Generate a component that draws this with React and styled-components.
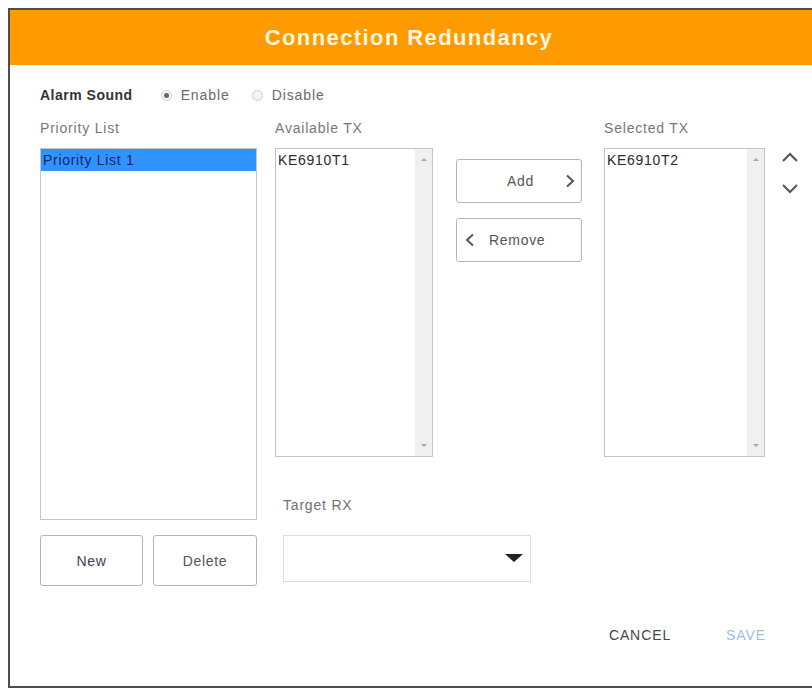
import React from "react";
import styled, { createGlobalStyle } from "styled-components";

const Global = createGlobalStyle`
  html, body { margin: 0; padding: 0; background: #fff; overflow: hidden; }
  body { font-family: "Liberation Sans", Arial, sans-serif; }
  * { box-sizing: border-box; }
`;

const Dialog = styled.div`
  margin: 8px 0 0 8px;
  width: 830px;
  height: 680px;
  border: 2px solid #4d4d4d;
  background: #fff;
  display: flex;
  flex-direction: column;
`;

const Header = styled.div`
  height: 55px;
  background: #ff9b00;
  color: #fff6dc;
  font-weight: bold;
  font-size: 22px;
  letter-spacing: 1.4px;
  display: flex;
  align-items: center;
  justify-content: center;
  padding-right: 28px;
  flex-shrink: 0;
`;

const Body = styled.div`
  width: 790px;
  padding: 20px 0 0 30px;
  display: flex;
  flex-direction: column;
`;

const AlarmRow = styled.div`
  height: 20px;
  display: flex;
  align-items: center;
  font-size: 14px;
  letter-spacing: 0.9px;
  color: #6a6a6a;
`;

const AlarmLabel = styled.span`
  font-weight: bold;
  color: #333;
  letter-spacing: 0.5px;
  margin-right: 28px;
`;

const Radio = styled.span`
  width: 11px;
  height: 11px;
  border-radius: 50%;
  border: 1px solid #cfcfcf;
  background: #f4f4f4;
  display: inline-flex;
  align-items: center;
  justify-content: center;
  margin-right: 9px;
  &::after {
    content: "";
    width: 5px;
    height: 5px;
    border-radius: 50%;
    background: ${(p) => (p.$on ? "#666" : "transparent")};
  }
`;

const RadioText = styled.span`
  margin-right: ${(p) => p.$gap || 0}px;
`;

const Main = styled.div`
  display: flex;
  margin-top: 15px;
`;

const Column = styled.div`
  display: flex;
  flex-direction: column;
  width: ${(p) => p.$w}px;
  margin-left: ${(p) => p.$ml || 0}px;
  margin-top: ${(p) => p.$mt || 0}px;
`;

const Label = styled.div`
  height: 20px;
  line-height: 16px;
  margin-bottom: 8px;
  font-size: 14px;
  letter-spacing: 0.8px;
  color: #777;
`;

const ListBox = styled.div`
  position: relative;
  height: ${(p) => p.$h}px;
  border: 1px solid #c4c4c4;
  background: #fff;
  padding-right: ${(p) => (p.$scroll ? 17 : 0)}px;
`;

const Item = styled.div`
  height: 22px;
  line-height: 22px;
  padding-left: 2px;
  font-size: 14px;
  letter-spacing: 0.7px;
  color: ${(p) => (p.$selected ? "#10266a" : "#2b2b2b")};
  background: ${(p) => (p.$selected ? "#3193ff" : "transparent")};
`;

const ScrollTrack = styled.div`
  position: absolute;
  top: 0;
  right: 0;
  bottom: 0;
  width: 17px;
  background: #f0f0f0;
  display: flex;
  flex-direction: column;
  justify-content: space-between;
  align-items: center;
  padding: 9px 0 9px;
`;

const Arrow = styled.span`
  width: 0;
  height: 0;
  border-left: 3px solid transparent;
  border-right: 3px solid transparent;
  ${(p) =>
    p.$up
      ? "border-bottom: 3px solid #a8a8a8;"
      : "border-top: 3px solid #a8a8a8;"}
`;

const ButtonRow = styled.div`
  display: flex;
  gap: 10px;
  margin-top: 15px;
`;

const Button = styled.button`
  width: ${(p) => p.$w}px;
  height: ${(p) => p.$h}px;
  margin-top: ${(p) => p.$mt || 0}px;
  border: 1px solid #b5b5b5;
  border-radius: 3px;
  background: #fff;
  font-family: inherit;
  font-size: 14px;
  letter-spacing: 0.7px;
  color: ${(p) => p.$color || "#555"};
  display: flex;
  align-items: center;
  justify-content: center;
  padding: 0;
  position: relative;
`;

const MoveButton = styled(Button)`
  justify-content: flex-start;
  padding-left: ${(p) => p.$pl}px;
  gap: ${(p) => p.$gap || 0}px;
`;

const Chev = styled.svg`
  display: block;
  flex-shrink: 0;
`;

const MidArea = styled.div`
  display: flex;
  flex-direction: column;
  margin-left: 18px;
`;

const TopRow = styled.div`
  display: flex;
`;

const Order = styled.div`
  display: flex;
  flex-direction: column;
  gap: 20px;
  margin: 31px 0 0 15px;
`;

const Target = styled.div`
  margin: 40px 0 0 8px;
  display: flex;
  flex-direction: column;
`;

const TargetLabel = styled.div`
  height: 16px;
  line-height: 16px;
  font-size: 14px;
  letter-spacing: 0.8px;
  color: #707070;
`;

const Select = styled.div`
  margin-top: 22px;
  width: 248px;
  height: 47px;
  border: 1px solid #dcdcdc;
  display: flex;
  align-items: center;
  justify-content: flex-end;
  padding-right: 7px;
`;

const Footer = styled.div`
  display: flex;
  justify-content: flex-end;
  align-items: center;
  gap: 55px;
  padding-right: 34px;
  margin-top: 41px;
  height: 16px;
  font-size: 14px;
  letter-spacing: 0.9px;
`;

const FooterBtn = styled.span`
  color: ${(p) => p.$color};
`;

const Up = () => (
  <Chev width="20" height="12" viewBox="0 0 20 12">
    <polyline points="3,10 10,3 17,10" fill="none" stroke="#555" strokeWidth="2" />
  </Chev>
);
const Down = () => (
  <Chev width="20" height="12" viewBox="0 0 20 12">
    <polyline points="3,2 10,9 17,2" fill="none" stroke="#555" strokeWidth="2" />
  </Chev>
);
const Right = () => (
  <Chev width="10" height="14" viewBox="0 0 10 14">
    <polyline points="2,1.5 8,7 2,12.5" fill="none" stroke="#555" strokeWidth="2" />
  </Chev>
);
const Left = () => (
  <Chev width="10" height="14" viewBox="0 0 10 14">
    <polyline points="8,1.5 2,7 8,12.5" fill="none" stroke="#555" strokeWidth="2" />
  </Chev>
);

export default function App() {
  return (
    <>
      <Global />
      <Dialog>
        <Header>Connection Redundancy</Header>
        <Body>
          <AlarmRow>
            <AlarmLabel>Alarm Sound</AlarmLabel>
            <Radio $on />
            <RadioText $gap={22}>Enable</RadioText>
            <Radio />
            <RadioText>Disable</RadioText>
          </AlarmRow>
          <Main>
            <Column $w={217}>
              <Label>Priority List</Label>
              <ListBox $h={372}>
                <Item $selected>Priority List 1</Item>
              </ListBox>
              <ButtonRow>
                <Button $w={103} $h={51} $color="#3a3f55">New</Button>
                <Button $w={104} $h={51}>Delete</Button>
              </ButtonRow>
            </Column>
            <MidArea>
              <TopRow>
                <Column $w={158}>
                  <Label>Available TX</Label>
                  <ListBox $h={309} $scroll>
                    <Item>KE6910T1</Item>
                    <ScrollTrack>
                      <Arrow $up />
                      <Arrow />
                    </ScrollTrack>
                  </ListBox>
                </Column>
                <Column $w={126} $ml={23} $mt={39}>
                  <MoveButton $w={126} $h={44} $pl={50} $gap={31}>
                    Add
                    <Right />
                  </MoveButton>
                  <MoveButton $w={126} $h={44} $mt={15} $pl={8} $gap={14}>
                    <Left />
                    Remove
                  </MoveButton>
                </Column>
                <Column $w={161} $ml={22}>
                  <Label>Selected TX</Label>
                  <ListBox $h={309} $scroll>
                    <Item>KE6910T2</Item>
                    <ScrollTrack>
                      <Arrow $up />
                      <Arrow />
                    </ScrollTrack>
                  </ListBox>
                </Column>
                <Order>
                  <Up />
                  <Down />
                </Order>
              </TopRow>
              <Target>
                <TargetLabel>Target RX</TargetLabel>
                <Select>
                  <svg width="18" height="9" viewBox="0 0 18 9">
                    <polygon points="0,0 18,0 9,8" fill="#222" />
                  </svg>
                </Select>
              </Target>
            </MidArea>
          </Main>
          <Footer>
            <FooterBtn $color="#454545">CANCEL</FooterBtn>
            <FooterBtn $color="#9cc0e2">SAVE</FooterBtn>
          </Footer>
        </Body>
      </Dialog>
    </>
  );
}
